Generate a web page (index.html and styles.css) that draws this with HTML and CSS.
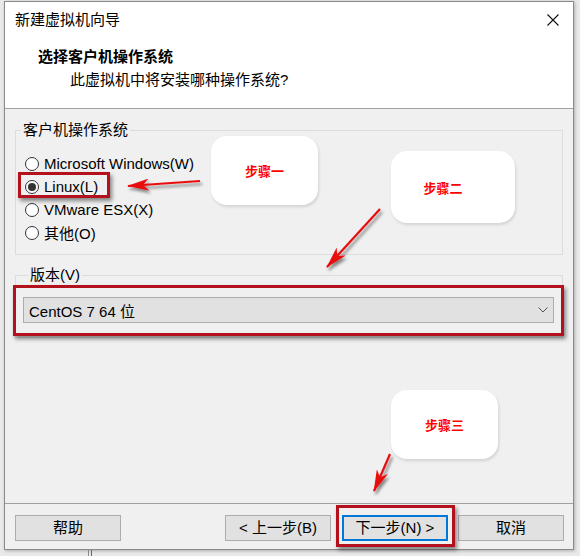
FILE: index.html
```html
<!DOCTYPE html>
<html lang="zh-CN">
<head>
<meta charset="utf-8">
<title>新建虚拟机向导</title>
<link rel="stylesheet" href="styles.css">
</head>
<body>
<div class="window">
  <div class="titlebar">
    <span class="title">新建虚拟机向导</span>
    <svg class="close" viewBox="0 0 12 12" width="12" height="12"><path d="M0.5,0.5 L11.5,11.5 M11.5,0.5 L0.5,11.5" stroke="#111" stroke-width="1.1" fill="none"/></svg>
  </div>
  <div class="header">
    <div class="h-title">选择客户机操作系统</div>
    <div class="h-sub">此虚拟机中将安装哪种操作系统?</div>
  </div>
  <div class="content">
    <fieldset class="group group-os">
      <legend>客户机操作系统</legend>
      <div class="radios">
        <div class="radio"><span class="dot"></span>Microsoft Windows(W)</div>
        <div class="radio"><span class="dot on"></span>Linux(L)</div>
        <div class="radio"><span class="dot"></span>VMware ESX(X)</div>
        <div class="radio"><span class="dot"></span>其他(O)</div>
      </div>
    </fieldset>
    <fieldset class="group group-ver">
      <legend>版本(V)</legend>
      <div class="combo">
        <span>CentOS 7 64 位</span>
        <svg class="chev" viewBox="0 0 10 6" width="10" height="6"><path d="M0.5,0.5 L5,5 L9.5,0.5" fill="none" stroke="#555" stroke-width="1"/></svg>
      </div>
    </fieldset>
  </div>
  <div class="footer">
    <button class="btn">帮助</button>
    <button class="btn prev">&lt; 上一步(B)</button>
    <button class="btn next">下一步(N) &gt;</button>
    <button class="btn cancel">取消</button>
  </div>
</div>

<div class="bg-mark"></div>

<div class="hl hl-linux"></div>
<div class="hl hl-combo"></div>
<div class="hl hl-next"></div>

<div class="bubble b1">步骤一</div>
<div class="bubble b2">步骤二</div>
<div class="bubble b3">步骤三</div>

<svg class="arrows" width="580" height="556" viewBox="0 0 580 556">
  <defs>
    <marker id="ah" viewBox="0 0 22 12" refX="21" refY="6" markerWidth="22" markerHeight="12" markerUnits="userSpaceOnUse" orient="auto">
      <path d="M0,0 L22,6 L0,12 L6,6 Z" fill="#e81010"/>
    </marker>
    <filter id="sh" x="-20%" y="-20%" width="140%" height="140%">
      <feDropShadow dx="2" dy="3" stdDeviation="1.5" flood-color="#000" flood-opacity="0.45"/>
    </filter>
  </defs>
  <g filter="url(#sh)" stroke="#e81010" stroke-width="2.2" fill="none">
    <line x1="200" y1="181" x2="128" y2="186" marker-end="url(#ah)"/>
    <line x1="380" y1="209" x2="327" y2="267" marker-end="url(#ah)"/>
    <line x1="390" y1="454" x2="374" y2="491" marker-end="url(#ah)"/>
  </g>
</svg>
</body>
</html>
```

FILE: styles.css
```css
html, body {
  margin: 0;
  padding: 0;
}
body {
  background: #e9e9e9;
  font-family: "Liberation Sans", "Noto Sans CJK SC", sans-serif;
  font-size: 15px;
  color: #000;
  width: 580px;
  height: 556px;
  overflow: hidden;
  position: relative;
}
* { box-sizing: border-box; }

.window {
  position: relative;
  margin: 1px 0 0 4px;
  width: 570px;
  height: 549px;
  border: 1px solid #8a8a8a;
  background: #f0f0f0;
  display: flex;
  flex-direction: column;
  box-shadow: 1px 1px 3px rgba(0,0,0,0.25);
}

.titlebar {
  height: 36px;
  background: #fff;
  display: flex;
  align-items: center;
  padding-left: 10px;
}
.title { line-height: 20px; }
.close {
  margin-left: auto;
  margin-right: 14px;
  display: block;
}

.header {
  height: 71px;
  background: #fff;
  border-bottom: 1px solid #a0a0a0;
  padding: 9px 0 0 33px;
}
.h-title {
  font-weight: bold;
  line-height: 20px;
}
.h-sub {
  line-height: 20px;
  margin-top: 3px;
  padding-left: 32px;
}

.content {
  padding: 12px 10px 0 10px;
}
.group {
  margin: 0;
  padding: 0;
  border: 1px solid #dcdcdc;
  min-width: 0;
}
.group legend {
  margin-left: 5px;
  padding: 0 2px;
  line-height: 18px;
}
.radios {
  padding: 13px 0 10px 9px;
}
.radio {
  display: flex;
  align-items: center;
  height: 23px;
}
.dot {
  width: 14px;
  height: 14px;
  border: 1px solid #333;
  border-radius: 50%;
  background: #fff;
  margin-right: 5px;
  display: flex;
  align-items: center;
  justify-content: center;
  flex: none;
}
.dot.on::after {
  content: "";
  width: 8px;
  height: 8px;
  border-radius: 50%;
  background: #333;
}

.group-ver {
  margin-top: 11px;
  padding: 0 8px 14px 7px;
}
.combo {
  margin-top: 13px;
  height: 26px;
  background: #e1e1e1;
  border: 1px solid #adadad;
  display: flex;
  align-items: center;
  padding: 0 5px 0 5px;
}
.chev {
  margin-left: auto;
  display: block;
}

.footer {
  margin-top: auto;
  border-top: 1px solid #a0a0a0;
  padding: 11px 9px 8px 10px;
  display: flex;
}
.btn {
  width: 106px;
  height: 26px;
  background: #e1e1e1;
  border: 1px solid #adadad;
  font: inherit;
  color: #000;
  padding: 0;
  line-height: 20px;
}
.prev { margin-left: auto; }
.next {
  margin-left: 11px;
  border: 2px solid #0078d7;
}
.cancel { margin-left: 10px; }

.bg-mark {
  position: absolute;
  left: 88px;
  top: 550px;
  width: 4px;
  height: 6px;
  border-left: 1px solid #8a8a8a;
  border-right: 1px solid #3b6ea8;
}

.hl {
  position: absolute;
  border: 3px solid #b3121d;
  box-shadow: 2px 3px 4px rgba(0,0,0,0.45);
}
.hl-linux { left: 18px; top: 172px; width: 92px; height: 26px; }
.hl-combo { left: 13px; top: 285px; width: 551px; height: 51px; }
.hl-next { left: 336px; top: 505px; width: 119px; height: 42px; }

.bubble {
  position: absolute;
  background: #fff;
  border-radius: 16px;
  display: flex;
  align-items: center;
  justify-content: center;
  color: #f00;
  font-family: "Noto Sans CJK SC", sans-serif;
  font-weight: bold;
  font-size: 13px;
  box-shadow: 1px 2px 3px rgba(0,0,0,0.12);
}
.b1 { left: 211px; top: 136px; width: 107px; height: 69px; }
.b2 { left: 391px; top: 151px; width: 124px; height: 72px; padding-right: 20px; }
.b3 { left: 391px; top: 390px; width: 107px; height: 69px; }

.arrows {
  position: absolute;
  left: 0;
  top: 0;
  pointer-events: none;
}
```
